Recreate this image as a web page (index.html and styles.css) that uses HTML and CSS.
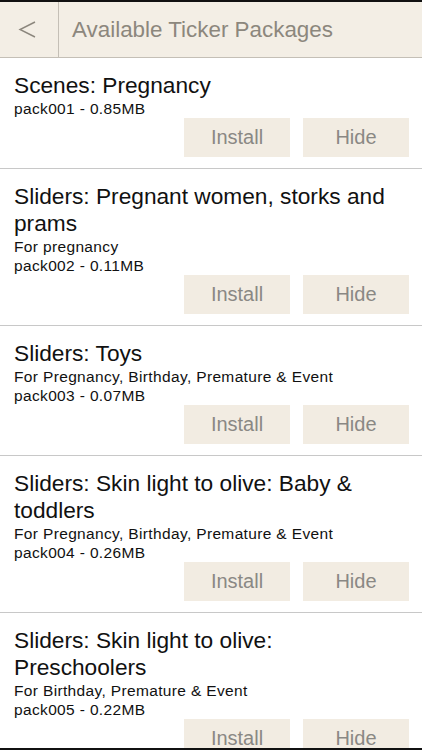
FILE: index.html
```html
<!DOCTYPE html>
<html>
  <head>
    <title>Available Ticker Packages</title>
    <link rel="stylesheet" href="styles.css">
  </head>
  <body>
    <div class="topbar">
      <div class="back">
        <svg width="22" height="22" viewBox="0 0 22 22">
          <polyline points="17,3 2,10.5 17,18" fill="none" stroke="#8c877d" stroke-width="1.4"/>
        </svg>
      </div>
      <div class="title">Available Ticker Packages</div>
    </div>

    <div class="list">
      <div class="pack">
        <div class="name">Scenes: Pregnancy</div>
        <div class="info">pack001 - 0.85MB</div>
        <div class="actions">
          <div class="btn">Install</div>
          <div class="btn">Hide</div>
        </div>
      </div>

      <div class="pack">
        <div class="name">Sliders: Pregnant women, storks and prams</div>
        <div class="info">For pregnancy</div>
        <div class="info">pack002 - 0.11MB</div>
        <div class="actions">
          <div class="btn">Install</div>
          <div class="btn">Hide</div>
        </div>
      </div>

      <div class="pack">
        <div class="name">Sliders: Toys</div>
        <div class="info">For Pregnancy, Birthday, Premature &amp; Event</div>
        <div class="info">pack003 - 0.07MB</div>
        <div class="actions">
          <div class="btn">Install</div>
          <div class="btn">Hide</div>
        </div>
      </div>

      <div class="pack">
        <div class="name">Sliders: Skin light to olive: Baby &amp; toddlers</div>
        <div class="info">For Pregnancy, Birthday, Premature &amp; Event</div>
        <div class="info">pack004 - 0.26MB</div>
        <div class="actions">
          <div class="btn">Install</div>
          <div class="btn">Hide</div>
        </div>
      </div>

      <div class="pack">
        <div class="name">Sliders: Skin light to olive: Preschoolers</div>
        <div class="info">For Birthday, Premature &amp; Event</div>
        <div class="info">pack005 - 0.22MB</div>
        <div class="actions">
          <div class="btn">Install</div>
          <div class="btn">Hide</div>
        </div>
      </div>
    </div>

    <div class="bottom-edge"></div>
  </body>
</html>
```

FILE: styles.css
```css
body, html {
  margin: 0;
  padding: 0;
}
body {
  font-family: "Liberation Sans", Arial, sans-serif;
  color: #111;
  background: #fff;
}
.topbar {
  display: flex;
  height: 55px;
  border-top: 2px solid #111;
  border-bottom: 1px solid #c4bfb6;
  background: #f3eee5;
}
.back {
  width: 58px;
  border-right: 1px solid #c4bfb6;
  display: flex;
  align-items: center;
  justify-content: center;
}
.back svg {
  display: block;
  margin-left: -1px;
}
.title {
  display: flex;
  align-items: center;
  padding-left: 13px;
  font-size: 22.4px;
  color: #8c877d;
}
.pack {
  padding: 14px 13px 11px 14px;
  border-bottom: 1px solid #c8c8c8;
}
.name {
  font-size: 22.7px;
  line-height: 27px;
}
.info {
  font-size: 15.5px;
  letter-spacing: 0.35px;
  line-height: 19px;
}
.actions {
  display: flex;
  justify-content: flex-end;
  gap: 13px;
}
.btn {
  width: 106px;
  height: 39px;
  display: flex;
  align-items: center;
  justify-content: center;
  background: #f2ece2;
  color: #8a8884;
  font-size: 20px;
}
.bottom-edge {
  position: fixed;
  left: 0;
  right: 0;
  bottom: 0;
  height: 2px;
  background: #111;
}
```
